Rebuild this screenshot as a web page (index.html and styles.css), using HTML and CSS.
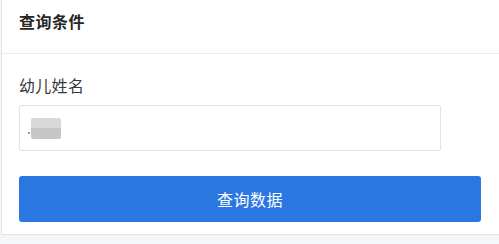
FILE: index.html
```html
<!DOCTYPE html>
<html lang="zh-CN">
<head>
<meta charset="utf-8">
<link rel="stylesheet" href="styles.css">
</head>
<body>
<div class="panel">
  <div class="panel-header">查询条件</div>
  <div class="panel-body">
    <div class="field-label">幼儿姓名</div>
    <div class="input-box">
      <span class="dot"></span>
      <span class="blurred"></span>
    </div>
    <button class="btn-query" type="button">查询数据</button>
  </div>
</div>
</body>
</html>
```
FILE: styles.css
```css
html, body {
  margin: 0;
  padding: 0;
}
body {
  background: #f4f6f9;
  width: 499px;
  height: 244px;
  overflow: hidden;
  font-family: "Noto Sans CJK SC", "Noto Sans", sans-serif;
}
.panel {
  margin-left: 1px;
  background: #ffffff;
  border-left: 1px solid #e6e6e6;
  border-bottom: 1px solid #e2e2e2;
}
.panel-header {
  height: 54px;
  box-sizing: border-box;
  padding: 11px 18px 0 17px;
  font-size: 16px;
  line-height: 20px;
  font-weight: bold;
  color: #262626;
  letter-spacing: 0.5px;
  border-bottom: 1px solid #ececec;
}
.panel-body {
  padding: 20px 18px 12px 17px;
}
.field-label {
  font-size: 16px;
  line-height: 22px;
  color: #3a3a3a;
  letter-spacing: 0.3px;
}
.input-box {
  margin-top: 9px;
  width: 422px;
  height: 46px;
  box-sizing: border-box;
  border: 1px solid #e3e3e3;
  border-radius: 2px;
  display: flex;
  align-items: center;
  padding-left: 8px;
}
.dot {
  width: 2px;
  height: 2px;
  background: #9a9a9a;
  margin-top: 10px;
  margin-right: 1px;
}
.blurred {
  width: 30px;
  height: 21px;
  background: linear-gradient(to bottom, #d9d9d9 0, #d9d9d9 50%, #c6c6c6 50%, #c6c6c6 100%);
  filter: blur(0.6px);
  border-radius: 2px;
}
.btn-query {
  display: block;
  margin-top: 25px;
  width: 462px;
  height: 46px;
  border: none;
  border-radius: 3px;
  background: #2a77e2;
  color: #ffffff;
  font-family: "Noto Sans CJK SC", "Noto Sans", sans-serif;
  font-size: 16px;
  padding: 0;
  letter-spacing: 0.5px;
}
```
